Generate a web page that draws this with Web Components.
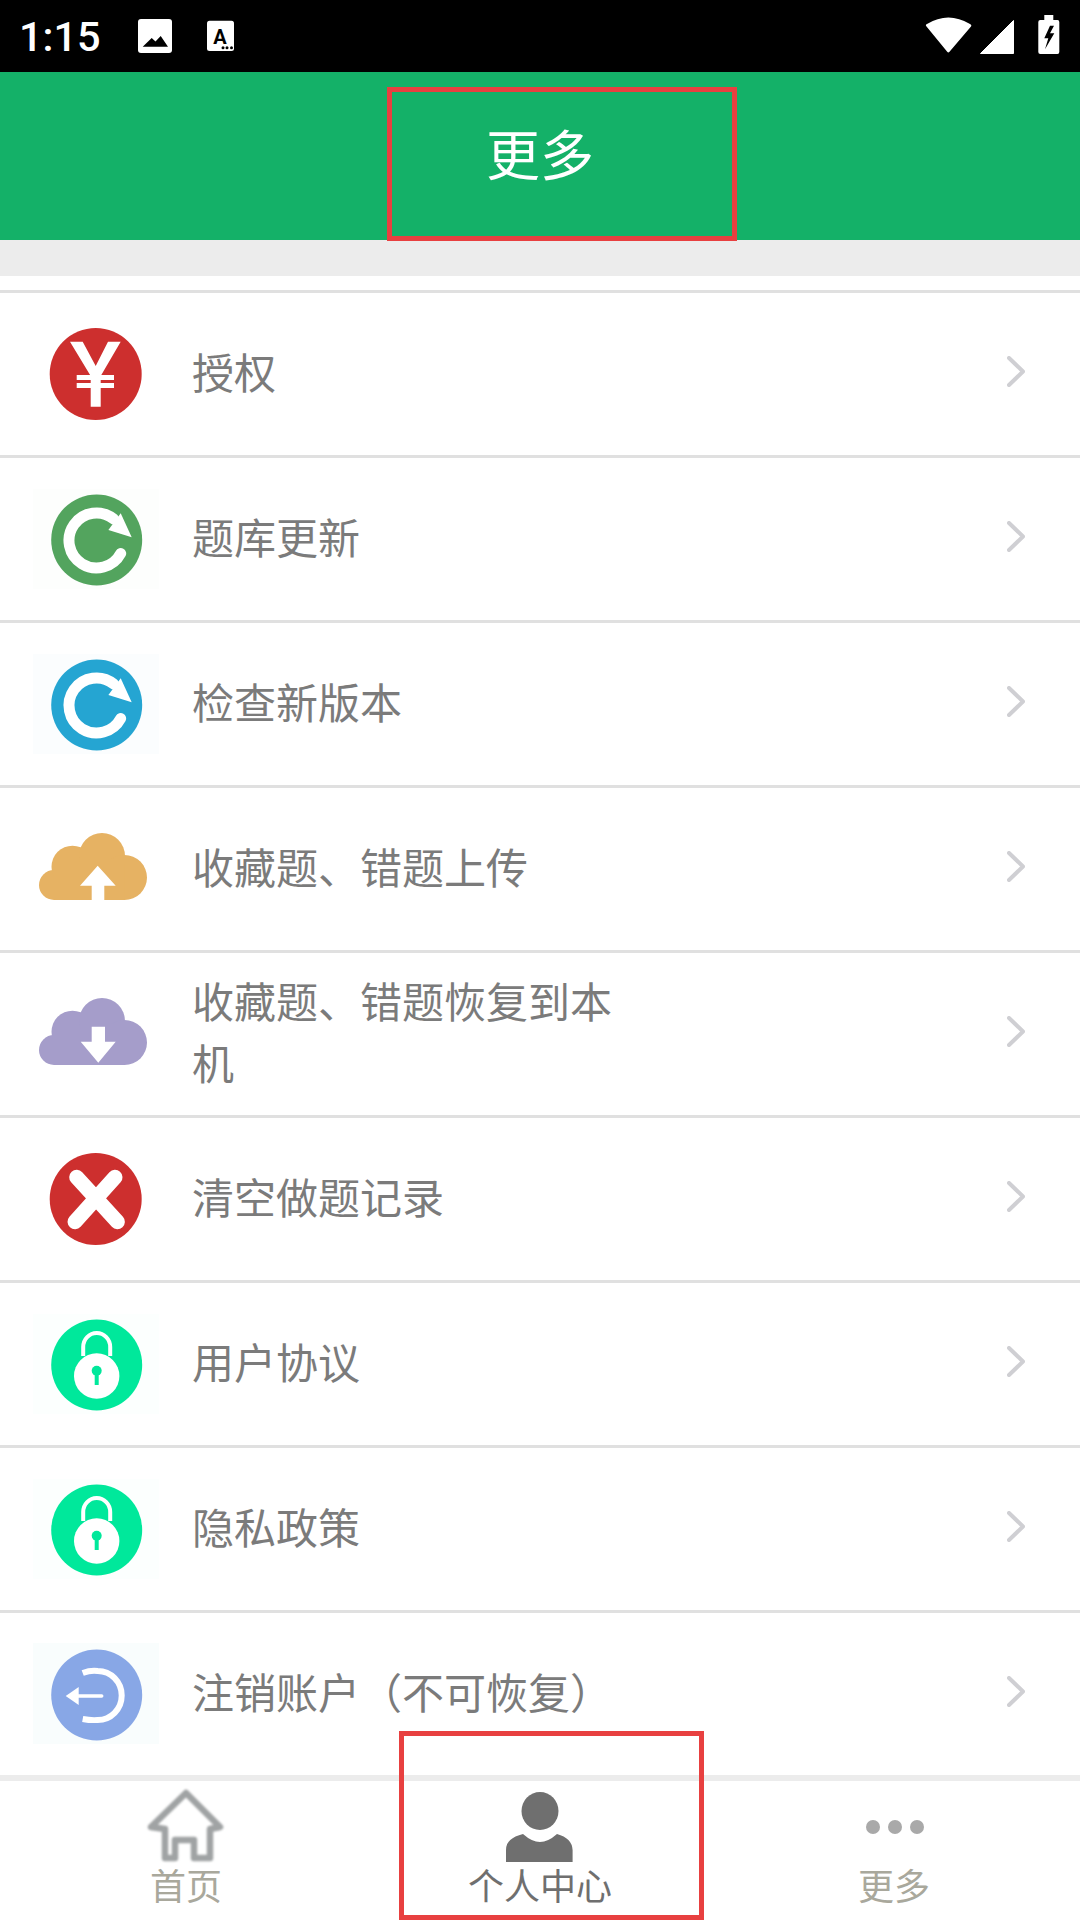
<!DOCTYPE html>
<html lang="zh">
<head>
<meta charset="utf-8">
<title>更多</title>
<style>
  html, body { margin: 0; padding: 0; background: #ececec; }
  body { font-family: "Noto Sans CJK SC", "Noto Sans", sans-serif; }
</style>
</head>
<body>
<app-screen>
  <status-bar slot="top"></status-bar>
  <title-bar slot="top">更多</title-bar>
  <settings-list>
    <setting-row icon="yen">授权</setting-row>
    <setting-row icon="refreshGreen">题库更新</setting-row>
    <setting-row icon="refreshBlue">检查新版本</setting-row>
    <setting-row icon="upload">收藏题、错题上传</setting-row>
    <setting-row icon="download">收藏题、错题恢复到本机</setting-row>
    <setting-row icon="clear">清空做题记录</setting-row>
    <setting-row icon="lock">用户协议</setting-row>
    <setting-row icon="lock">隐私政策</setting-row>
    <setting-row icon="logout">注销账户（不可恢复）</setting-row>
  </settings-list>
  <tab-bar slot="bottom">
    <tab-item icon="home">首页</tab-item>
    <tab-item icon="person" active>个人中心</tab-item>
    <tab-item icon="dots">更多</tab-item>
  </tab-bar>
  <mark-box slot="overlay" style="left:387px;top:87px;width:350px;height:154px"></mark-box>
  <mark-box slot="overlay" style="left:399px;top:1731px;width:305px;height:189px"></mark-box>
</app-screen>

<script>
// Shared cloud outline, the two cloud icons only differ in colour + arrow.
const cloud = (fill) => `
  <g fill="${fill}">
    <circle cx="24" cy="71" r="15"/>
    <circle cx="42.5" cy="52.7" r="21"/>
    <circle cx="72" cy="42" r="23"/>
    <circle cx="94.5" cy="63.5" r="22.5"/>
    <rect x="24" y="50" width="70.5" height="36"/>
  </g>`;

const refresh = (fill, bg) => `
  <rect x="3" y="5" width="126" height="100" fill="${bg}"/>
  <g transform="translate(66.7 56)">
    <circle r="45.5" fill="${fill}"/>
    <path d="M17 -21 A27.5 27.5 0 1 0 24 13.5" fill="none" stroke="#fff" stroke-width="11" stroke-linecap="round"/>
    <path d="M35 -2.7 L24 -26.7 L11.7 -10 Z" fill="#fff"/>
  </g>`;

const ICONS = {
  yen: `
    <circle cx="65.7" cy="55" r="46" fill="#cd2f2e"/>
    <path d="M40 22.7H52.7L65.7 47L78 22.7H90.7L70.7 57V87.7H60.7V57Z" fill="#fff"/>
    <path d="M46.7 56H84V61H46.7ZM46.7 64H84V69H46.7Z" fill="#fff"/>`,
  refreshGreen: refresh("#53a45e", "#fdfefd"),
  refreshBlue: refresh("#25a5d2", "#fbfdfe"),
  upload: cloud("#e6b263") + `
    <path d="M67.7 51.7L50 71.7H61.7V87H74.3V71.7H85.7Z" fill="#fff"/>`,
  download: cloud("#a59dca") + `
    <path d="M61.7 47.7H75V62.7H85.7L68.3 83.7L50.7 62.7H61.7Z" fill="#fff"/>`,
  clear: `
    <circle cx="65.7" cy="55" r="46" fill="#cd2f2e"/>
    <path d="M46.7 33.3L87.4 77.7M85 33.3L45 77.7" stroke="#fff" stroke-width="15" stroke-linecap="round" fill="none"/>`,
  lock: `
    <rect x="3" y="5" width="126" height="100" fill="#fcfffe"/>
    <g transform="translate(66.7 56)">
      <circle r="45.5" fill="#00e89b"/>
      <path d="M-13.5 -9V-18A13.5 14 0 0 1 13.5 -18V-9" fill="none" stroke="#fff" stroke-width="4"/>
      <circle cy="11" r="22.7" fill="#fff"/>
      <circle cy="5.7" r="5" fill="#00e89b"/>
      <rect x="-2" y="6" width="4" height="14" fill="#00e89b"/>
    </g>`,
  logout: `
    <rect x="3" y="4" width="126" height="101" fill="#f9fdfd"/>
    <g transform="translate(66.7 56)">
      <circle r="45.5" fill="#88a7e6"/>
      <path d="M-14 -22 Q-6 -25 1 -24 A24 24.5 0 0 1 1 25 Q-6 25.5 -14 24" fill="none" stroke="#fff" stroke-width="6"/>
      <path d="M-19 1H5" stroke="#fff" stroke-width="3.5" stroke-linecap="round"/>
      <path d="M-31 1L-18 -8V10Z" fill="#fff"/>
    </g>`,
};

const TAB_ICONS = {
  home: `<svg class="soft" width="120" height="86" viewBox="-4 6 120 86">
    <path d="M21 52L56 18L90 52L80 54V83H64V65H45V83H35V54Z" fill="none" stroke="#a0a3a4" stroke-width="6.5" stroke-linejoin="round"/>
  </svg>`,
  person: `<svg width="120" height="86" viewBox="480 1781 120 86">
    <ellipse cx="540" cy="1811" rx="18.5" ry="19" fill="#6f6f6f"/>
    <path d="M506 1862V1850Q506 1838 523 1834Q532 1842 540 1842Q548 1842 557 1834Q572 1838 572.6 1850V1862Z" fill="#6f6f6f"/>
  </svg>`,
  dots: `<svg width="120" height="86" viewBox="834 1781 120 86">
    <g fill="#a9a9a9">
      <ellipse cx="873" cy="1827" rx="7" ry="7"/>
      <ellipse cx="895" cy="1827" rx="7" ry="7"/>
      <ellipse cx="917" cy="1827" rx="7" ry="7"/>
    </g>
  </svg>`,
};

class AppScreen extends HTMLElement {
  constructor() {
    super();
    this.attachShadow({ mode: "open" }).innerHTML = `
      <style>
        :host {
          display: flex;
          flex-direction: column;
          position: relative;
          width: 1080px;
          height: 1920px;
          overflow: hidden;
          background: #ececec;
        }
        .body { flex: 1; min-height: 0; }
      </style>
      <slot name="top"></slot>
      <div class="body"><slot></slot></div>
      <slot name="bottom"></slot>
      <slot name="overlay"></slot>
    `;
  }
}

class StatusBar extends HTMLElement {
  constructor() {
    super();
    this.attachShadow({ mode: "open" }).innerHTML = `
      <style>
        :host {
          display: flex;
          align-items: flex-start;
          height: 72px;
          background: #000;
          color: #fff;
        }
        .time {
          font: 500 41.5px/41px Roboto, sans-serif;
          margin: 16px 0 0 19px;
          width: 119px;
        }
        svg { display: block; flex: none; }
        .spacer { flex: 1; }
      </style>
      <span class="time">1:15</span>
      <svg style="margin-top:19px" width="34" height="34" viewBox="138 19 34 34">
        <rect x="138" y="19" width="34" height="34" rx="3" fill="#fff"/>
        <path d="M142.7 46.7L151.7 38L155.5 41.5L160.7 36L168 46.7Z" fill="#000"/>
      </svg>
      <svg style="margin:20px 0 0 35px" width="28" height="32" viewBox="207 20 28 32">
        <rect x="207" y="20.7" width="27" height="30.3" rx="2.5" fill="#fff"/>
        <text x="220" y="44.4" font-family="Roboto, sans-serif" font-weight="700" font-size="20" text-anchor="middle" fill="#000">A</text>
        <g fill="#000"><circle cx="223" cy="47.7" r="1.5"/><circle cx="227" cy="47.7" r="1.5"/><circle cx="231.5" cy="47.7" r="1.5"/></g>
      </svg>
      <span class="spacer"></span>
      <svg style="margin-top:15px" width="48" height="40" viewBox="925 15 48 40">
        <path d="M926.5 26.5Q925 25 927 24Q948.3 11 970 24Q972 25 971 26.5L949.5 51.8Q948.3 53 947.2 51.8Z" fill="#fff"/>
      </svg>
      <svg style="margin:20px 0 0 7px" width="34" height="34" viewBox="980 20 34 34">
        <path d="M1013.5 20.5V53.5H980.5Z" fill="#fff" stroke="#fff" stroke-width="1" stroke-linejoin="round"/>
      </svg>
      <svg style="margin:15px 20px 0 24px" width="22" height="40" viewBox="1038 15 22 40">
        <path d="M1044.3 15H1053.3V20H1057.5Q1059.3 20 1059.3 22V52Q1059.3 54 1057.5 54H1040.3Q1038.3 54 1038.3 52V22Q1038.3 20 1040.3 20H1044.3Z" fill="#fff"/>
        <path d="M1050 25.7L1044.3 38.3H1048.3L1045 49.3L1054.3 33.3H1050L1054 25.7Z" fill="#000"/>
      </svg>
    `;
  }
}

class TitleBar extends HTMLElement {
  constructor() {
    super();
    this.attachShadow({ mode: "open" }).innerHTML = `
      <style>
        :host {
          display: flex;
          align-items: center;
          justify-content: center;
          height: 168px;
          margin-bottom: 36px;
          padding-bottom: 6px;
          box-sizing: border-box;
          background: #14b168;
          color: #fff;
          font-size: 54px;
          line-height: 60px;
        }
      </style>
      <slot></slot>
    `;
  }
}

class SettingsList extends HTMLElement {
  constructor() {
    super();
    this.attachShadow({ mode: "open" }).innerHTML = `
      <style>
        :host {
          display: block;
          background: #fff;
          padding-top: 14px;
        }
        .rule { height: 3px; background: #e0e0e0; }
      </style>
      <div class="rule"></div>
      <slot></slot>
    `;
  }
}

class SettingRow extends HTMLElement {
  constructor() {
    super();
    const icon = ICONS[this.getAttribute("icon")] || "";
    this.attachShadow({ mode: "open" }).innerHTML = `
      <style>
        :host {
          display: flex;
          align-items: center;
          height: 165px;
          box-sizing: border-box;
          padding: 0 50px 0 30px;
          background: #fff;
          border-bottom: 3px solid #e0e0e0;
          color: #7b7b7b;
          font-size: 42px;
          line-height: 62px;
        }
        :host(:last-child) { border-bottom: 0; height: 162px; }
        .icon { flex: none; display: block; filter: blur(0.4px); }
        .label { flex: none; width: 430px; margin-left: 32px; margin-top: -6px; }
        .spacer { flex: 1; }
        .chev { flex: none; display: block; filter: blur(0.6px); }
      </style>
      <svg class="icon" width="130" height="110" viewBox="0 0 130 110">${icon}</svg>
      <div class="label"><slot></slot></div>
      <span class="spacer"></span>
      <svg class="chev" width="24" height="36" viewBox="0 0 24 36">
        <path d="M3 2L17 15.5L3 29" fill="none" stroke="#cfcfd3" stroke-width="4" stroke-linecap="round" stroke-linejoin="round"/>
      </svg>
    `;
  }
}

class TabBar extends HTMLElement {
  constructor() {
    super();
    this.attachShadow({ mode: "open" }).innerHTML = `
      <style>
        :host {
          display: grid;
          grid-template-columns: repeat(3, 1fr);
          height: 139px;
          margin-top: 6px;
          padding: 0 9px;
          background: #fff;
        }
      </style>
      <slot></slot>
    `;
  }
}

class TabItem extends HTMLElement {
  constructor() {
    super();
    this.attachShadow({ mode: "open" }).innerHTML = `
      <style>
        :host {
          display: flex;
          flex-direction: column;
          align-items: center;
          color: #a9a89c;
          font-size: 36px;
          line-height: 40px;
        }
        :host([active]) { color: #6f6f6f; }
        svg { display: block; margin-bottom: -3px; filter: blur(0.5px); }
        svg.soft { filter: blur(0.9px); }
      </style>
      ${TAB_ICONS[this.getAttribute("icon")] || ""}
      <slot></slot>
    `;
  }
}

// Red annotation rectangles drawn on top of the screen.
class MarkBox extends HTMLElement {
  constructor() {
    super();
    this.attachShadow({ mode: "open" }).innerHTML = `
      <style>
        :host {
          display: block;
          position: absolute;
          box-sizing: border-box;
          border: 5px solid #e84040;
        }
      </style>
    `;
  }
}

customElements.define("app-screen", AppScreen);
customElements.define("status-bar", StatusBar);
customElements.define("title-bar", TitleBar);
customElements.define("settings-list", SettingsList);
customElements.define("setting-row", SettingRow);
customElements.define("tab-bar", TabBar);
customElements.define("tab-item", TabItem);
customElements.define("mark-box", MarkBox);
</script>
</body>
</html>
